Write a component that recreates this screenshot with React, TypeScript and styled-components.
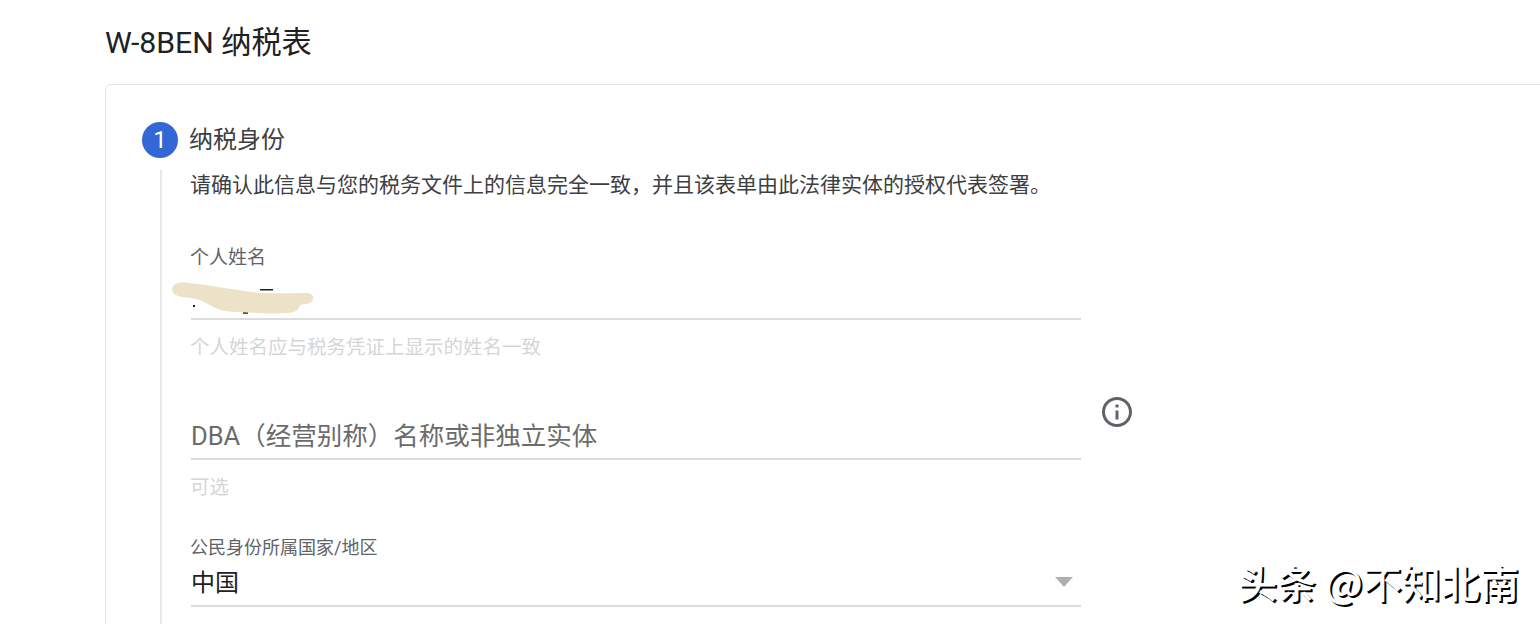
import React from 'react';
import styled, { createGlobalStyle } from 'styled-components';
import { MdInfoOutline } from 'react-icons/md';

const GlobalStyle = createGlobalStyle`
  html, body {
    margin: 0;
    padding: 0;
    height: 624px;
    overflow: hidden;
    background: #fff;
    font-family: 'Roboto', 'Noto Sans CJK SC', sans-serif;
  }
`;

const Page = styled.div`
  position: relative;
  width: 1540px;
  height: 624px;
  overflow: hidden;
  padding-left: 105px;
  box-sizing: border-box;
`;

const Title = styled.h1`
  margin: 0;
  height: 84px;
  line-height: 85px;
  font-size: 30.2px;
  font-weight: 400;
  color: #202124;
`;

const Card = styled.div`
  width: 1500px;
  height: 600px;
  box-sizing: border-box;
  border: 1px solid #e3e3e3;
  border-radius: 6px;
  padding: 37px 0 0 36px;
`;

const StepHeader = styled.div`
  display: flex;
  align-items: center;
  gap: 12px;
  height: 36px;
`;

const StepBadge = styled.div`
  width: 36px;
  height: 36px;
  border-radius: 50%;
  background: #3367d6;
  color: #fff;
  font-size: 24px;
  line-height: 36px;
  text-align: center;
`;

const StepTitle = styled.div`
  font-size: 24px;
  margin-left: -1px;
  padding-bottom: 6px;
  color: #3c4043;
`;

const StepBody = styled.div`
  margin: 12px 0 0 18px;
  padding: 1px 0 0 29px;
  border-left: 2px solid #e8e8e8;
  height: 500px;
`;

const Description = styled.p`
  margin: 0 0 0 -1px;
  height: 69px;
  line-height: 28px;
  font-size: 21px;
  color: #3c4043;
`;

const FieldRow = styled.div`
  display: flex;
  align-items: flex-start;
  gap: 18px;
`;

const Field = styled.div<{ $height: number }>`
  position: relative;
  width: 890px;
  height: ${(p) => p.$height}px;
  box-sizing: border-box;
  border-bottom: 2px solid #dcdcdc;
`;

const FieldLabel = styled.div<{ $size: number; $top: number }>`
  padding-top: ${(p) => p.$top}px;
  margin-left: -1px;
  font-size: ${(p) => p.$size}px;
  line-height: 26px;
  color: #5f6368;
`;

const FieldValue = styled.div`
  padding-top: 5px;
  font-size: 24px;
  line-height: 34px;
  color: #202124;
`;

const Placeholder = styled.div`
  padding-top: 42px;
  font-size: 25.5px;
  line-height: 38px;
  color: #6b6b6b;
`;

const Hint = styled.div`
  height: 41px;
  padding-top: 14px;
  margin-left: -1px;
  font-size: 19.5px;
  line-height: 27px;
  color: #d6d6d6;
`;

const InfoButton = styled.div`
  margin-top: 19px;
  width: 36px;
  height: 36px;
  color: #5f6368;
  font-size: 36px;
  line-height: 0;
`;

const Redaction = styled.svg`
  position: absolute;
  left: -20px;
  top: 40px;
`;

const Caret = styled.div`
  position: absolute;
  right: 8px;
  top: 62px;
  width: 0;
  height: 0;
  border-left: 9px solid transparent;
  border-right: 9px solid transparent;
  border-top: 10px solid #b0b0b0;
`;

const Watermark = styled.div`
  position: absolute;
  left: 1238px;
  top: 556px;
  font-family: 'Noto Sans CJK SC', sans-serif;
  font-size: 39px;
  font-weight: 500;
  line-height: 50px;
  white-space: nowrap;
  color: #fff;
  text-shadow: 2px 2px 0.5px #000;
`;

const App = () => (
  <Page>
    <GlobalStyle />
    <Title>W-8BEN 纳税表</Title>
    <Card>
      <StepHeader>
        <StepBadge>1</StepBadge>
        <StepTitle>纳税身份</StepTitle>
      </StepHeader>
      <StepBody>
        <Description>请确认此信息与您的税务文件上的信息完全一致，并且该表单由此法律实体的授权代表签署。</Description>

        <FieldRow>
          <Field $height={80}>
            <FieldLabel $size={19} $top={5}>个人姓名</FieldLabel>
            <Redaction width="150" height="40" viewBox="0 0 150 40">
              <rect x="89" y="9" width="13" height="1.5" fill="#222" />
              <rect x="22" y="25" width="2" height="2" fill="#222" />
              <rect x="126" y="25" width="2" height="2" fill="#222" />
              <rect x="72" y="32" width="5" height="2" fill="#555" />
              <path
                d="M1 9 C2 3 9 1 18 3 C38 5 58 9 80 12 C100 14 120 13 134 13 C141 13 143 16 142 19 C141 23 136 24 129 25 C128 30 124 33 116 33 C100 34 84 33 70 32 C60 32 50 31 44 28 C36 23 28 19 19 18 C10 17 1 16 1 9 Z"
                fill="#ece2c8"
              />
            </Redaction>
          </Field>
        </FieldRow>
        <Hint>个人姓名应与税务凭证上显示的姓名一致</Hint>

        <FieldRow>
          <Field $height={85}>
            <Placeholder>DBA（经营别称）名称或非独立实体</Placeholder>
          </Field>
          <InfoButton>
            <MdInfoOutline />
          </InfoButton>
        </FieldRow>
        <Hint>可选</Hint>

        <FieldRow>
          <Field $height={92}>
            <FieldLabel $size={18} $top={20}>公民身份所属国家/地区</FieldLabel>
            <FieldValue>中国</FieldValue>
            <Caret />
          </Field>
        </FieldRow>
      </StepBody>
    </Card>
    <Watermark>头条 @不知北南</Watermark>
  </Page>
);

export default App;
